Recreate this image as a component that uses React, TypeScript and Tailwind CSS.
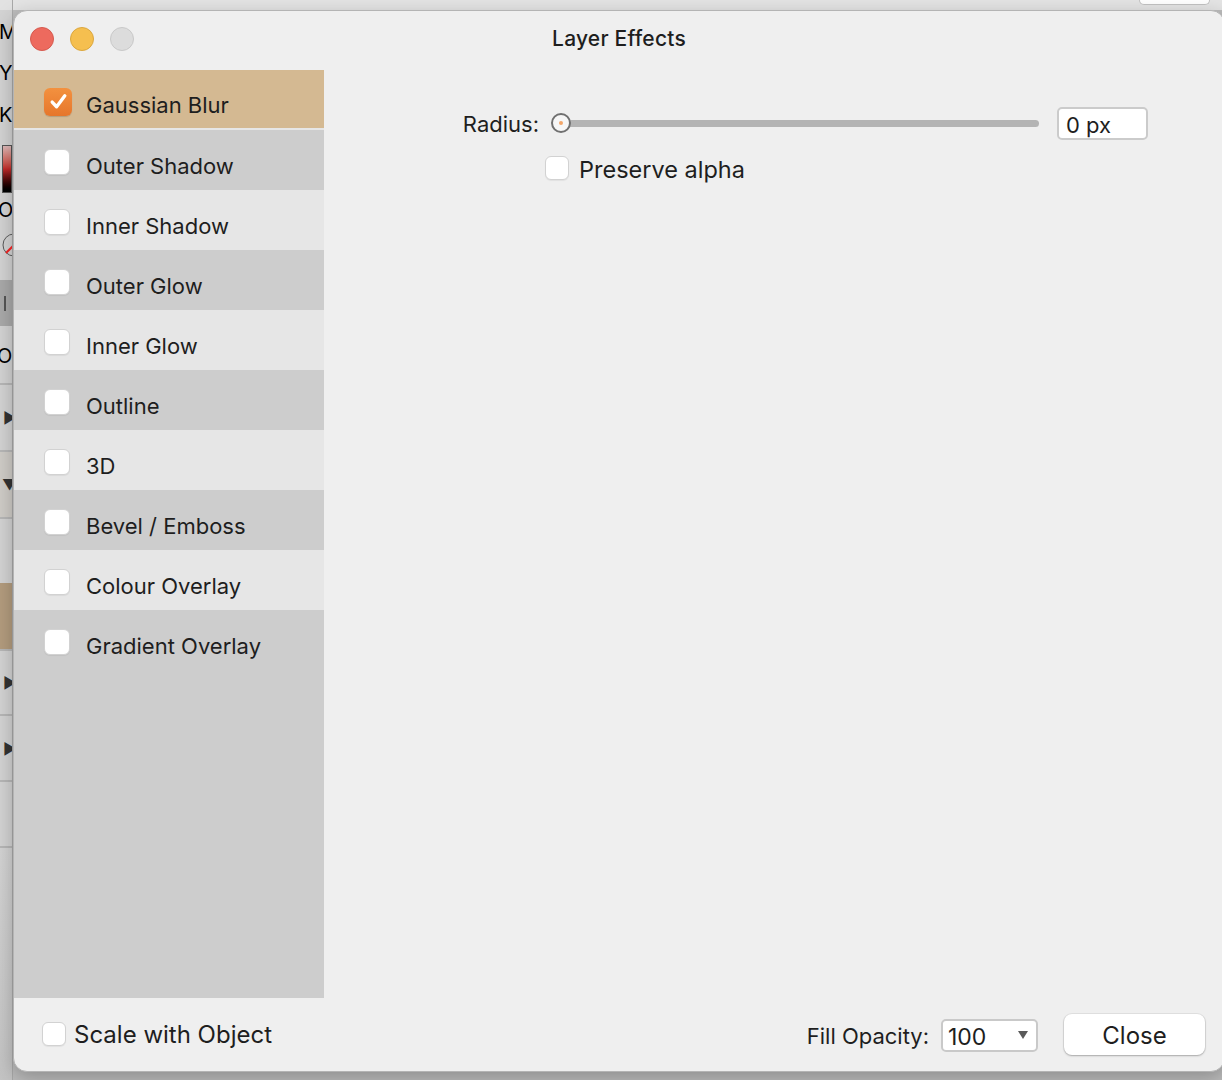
import React from "react";

var effects = [
  "Gaussian Blur",
  "Outer Shadow",
  "Inner Shadow",
  "Outer Glow",
  "Inner Glow",
  "Outline",
  "3D",
  "Bevel / Emboss",
  "Colour Overlay",
  "Gradient Overlay",
];

function Checkbox(props: { checked?: boolean; size?: string }) {
  var size = props.size || "w-[26px] h-[26px]";
  if (props.checked) {
    return (
      <div
        className={
          size +
          " shrink-0 rounded-[6px] bg-gradient-to-b from-[#f3913f] to-[#e6762b] flex items-center justify-center shadow-[0_1px_1px_rgba(0,0,0,0.15)]"
        }
      >
        <svg width="21" height="21" viewBox="0 0 20 20" fill="none">
          <path d="M4 10.5 L8.2 15 L16 4.5" stroke="white" strokeWidth="3.2" strokeLinecap="round" strokeLinejoin="round" />
        </svg>
      </div>
    );
  }
  return (
    <div
      className={
        size +
        " shrink-0 rounded-[6px] bg-white border border-[#d2d2d2] shadow-[0_1px_1px_rgba(0,0,0,0.06)]"
      }
    />
  );
}

function LeftBackdrop() {
  // bits of the app window sitting behind the dialog
  return (
    <div className="w-[13px] h-[1080px] shrink-0 overflow-hidden bg-[#d3d3d3] flex flex-col text-[20px] leading-none text-black border-r border-[#a9a9a9]">
      <div className="h-[10px] bg-[#e2e2e2]" />
      <div className="h-[12px]" />
      <div className="h-[16px] -ml-[1px]">M</div>
      <div className="h-[25px]" />
      <div className="h-[16px] -ml-[1px]">Y</div>
      <div className="h-[26px]" />
      <div className="h-[16px] -ml-[1px]">K</div>
      <div className="h-[24px]" />
      <div className="h-[48px] ml-[2px] border border-[#555] bg-gradient-to-b from-[#ddb9b9] via-[#c22a2a] to-black" />
      <div className="h-[7px]" />
      <div className="h-[20px] -ml-[2px]">O</div>
      <div className="h-[13px]" />
      <div className="h-[25px] ml-[2px] relative">
        <svg width="26" height="26" viewBox="0 0 26 26">
          <circle cx="12" cy="12" r="11" fill="none" stroke="#555" strokeWidth="1" />
          <line x1="4" y1="20" x2="20" y2="4" stroke="#e02020" strokeWidth="2" />
        </svg>
      </div>
      <div className="h-[22px]" />
      <div className="h-[46px] bg-[#a9a9a9] flex items-center pl-[4px]">
        <div className="w-[2px] h-[15px] bg-[#555]" />
      </div>
      <div className="h-[20px]" />
      <div className="h-[18px] -ml-[3px]">O</div>
      <div className="h-[19px]" />
      <div className="h-[2px] bg-[#b7b7b7]" />
      <div className="h-[65px] flex items-center pl-[3px] text-[15px] text-[#333]">▶</div>
      <div className="h-[2px] bg-[#b7b7b7]" />
      <div className="h-[65px] bg-[#cfccc7] flex items-center pl-[2px] text-[15px] text-[#333]">▼</div>
      <div className="h-[2px] bg-[#b7b7b7]" />
      <div className="h-[64px]" />
      <div className="h-[66px] bg-[#b39c7e]" />
      <div className="h-[2px] bg-[#b7b7b7]" />
      <div className="h-[63px] flex items-center pl-[3px] text-[15px] text-[#333]">▶</div>
      <div className="h-[2px] bg-[#b7b7b7]" />
      <div className="h-[64px] flex items-center pl-[3px] text-[15px] text-[#333]">▶</div>
      <div className="h-[2px] bg-[#b7b7b7]" />
      <div className="h-[64px]" />
      <div className="h-[2px] bg-[#b7b7b7]" />
      <div className="flex-1 bg-gradient-to-b from-[#d3d3d3] to-[#c4c4c4]" />
    </div>
  );
}

export default function App() {
  return (
    <div
      className="w-[1222px] h-[1080px] overflow-hidden flex bg-[#bcbcbc] text-[#1e1e1e]"
      style={{ fontFamily: "Inter, 'Noto Sans', sans-serif" }}
    >
      <LeftBackdrop />
      <div className="flex flex-col flex-1 min-w-0">
        {/* top strip of the app behind */}
        <div className="h-[10px] shrink-0 bg-[#e4e4e4] flex justify-end pr-[12px]">
          <div className="w-[71px] h-[5px] bg-white border border-t-0 border-[#c2c2c2] rounded-b-[5px]" />
        </div>

        {/* dialog window */}
        <div className="w-[1212px] h-[1062px] shrink-0 bg-[#efefef] border border-[#b4b4b4] rounded-[14px] overflow-hidden flex flex-col shadow-[0_6px_20px_rgba(0,0,0,0.25)]">
          {/* title bar */}
          <div className="h-[59px] shrink-0 grid grid-cols-[1fr_auto_1fr] items-center">
            <div className="flex items-center gap-[16px] pl-[16px] -mt-[4px]">
              <div className="w-[24px] h-[24px] rounded-full bg-[#ed6a5e] border border-[#d65a4f]" />
              <div className="w-[24px] h-[24px] rounded-full bg-[#f5bf4f] border border-[#dba73f]" />
              <div className="w-[24px] h-[24px] rounded-full bg-[#dcdcdc] border border-[#c9c9c9]" />
            </div>
            <div className="text-[21px] font-medium -mt-[4px] tracking-[0.01em]">Layer Effects</div>
            <div />
          </div>

          {/* body */}
          <div className="h-[928px] shrink-0 flex">
            <div className="w-[310px] shrink-0 bg-[#cdcdcd] flex flex-col">
              {effects.map(function (name, i) {
                var bg =
                  i === 0
                    ? "bg-[#d4b992] h-[58px]"
                    : i % 2 === 1
                      ? "bg-[#cdcdcd] h-[60px]"
                      : "bg-[#e6e6e6] h-[60px]";
                return (
                  <React.Fragment key={name}>
                    <div className={bg + " flex items-center pl-[30px] shrink-0"}>
                      {i === 0 ? (
                        <div className="pt-[5px]">
                          <Checkbox checked size="w-[28px] h-[28px]" />
                        </div>
                      ) : (
                        <div className="pt-[3px] pr-[2px]">
                          <Checkbox />
                        </div>
                      )}
                      <span className="ml-[14px] text-[22px] pt-[13px]">{name}</span>
                    </div>
                    {i === 0 && <div className="h-[2px] bg-[#e6e6e6] shrink-0" />}
                  </React.Fragment>
                );
              })}
            </div>

            {/* settings */}
            <div className="flex-1 flex flex-col pt-[37px]">
              <div className="flex items-center h-[32px]">
                <div className="w-[215px] text-right text-[22px] pt-[3px]">Radius:</div>
                <div className="ml-[12px] w-[488px] flex items-center">
                  <div className="w-[20px] h-[20px] rounded-full bg-[#f6f6f6] border-2 border-[#707070] flex items-center justify-center shrink-0 relative z-10">
                    <div className="w-[4px] h-[4px] rounded-full bg-[#f3a669]" />
                  </div>
                  <div className="flex-1 h-[7px] bg-[#b4b4b4] rounded-full -ml-[3px]" />
                </div>
                <div className="ml-[18px] w-[91px] h-[33px] bg-white border-2 border-[#cbcbcb] rounded-[5px] flex items-center pl-[7px] text-[22px] pt-[4px]">
                  0 px
                </div>
              </div>
              <div className="flex items-center mt-[9px] ml-[221px]">
                <Checkbox size="w-[24px] h-[24px]" />
                <span className="ml-[10px] text-[23.5px] pt-[4px]">Preserve alpha</span>
              </div>
            </div>
          </div>

          {/* bottom bar */}
          <div className="flex-1 flex items-center pl-[28px] pr-[19px] pb-[2px]">
            <Checkbox size="w-[24px] h-[24px]" />
            <span className="ml-[8px] text-[24px] pt-[3px]">Scale with Object</span>
            <div className="flex-1" />
            <span className="text-[22px] pt-[6px]">Fill Opacity:</span>
            <div className="ml-[12px] w-[97px] h-[33px] mt-[3px] bg-white border-2 border-[#c9c9c9] rounded-[5px] flex items-center justify-between pl-[5px] pr-[8px]">
              <span className="text-[23px] pt-[4px]">100</span>
              <svg width="10" height="8" viewBox="0 0 10 8">
                <path d="M0 0 L10 0 L5 8 Z" fill="#5a5a5a" />
              </svg>
            </div>
            <div className="ml-[26px] mt-[2px] w-[141px] h-[41px] bg-white rounded-[8px] shadow-[0_0_0_1px_rgba(0,0,0,0.06),0_1px_2px_rgba(0,0,0,0.25)] flex items-center justify-center text-[24px] pt-[3px]">
              Close
            </div>
          </div>
        </div>
      </div>
    </div>
  );
}
